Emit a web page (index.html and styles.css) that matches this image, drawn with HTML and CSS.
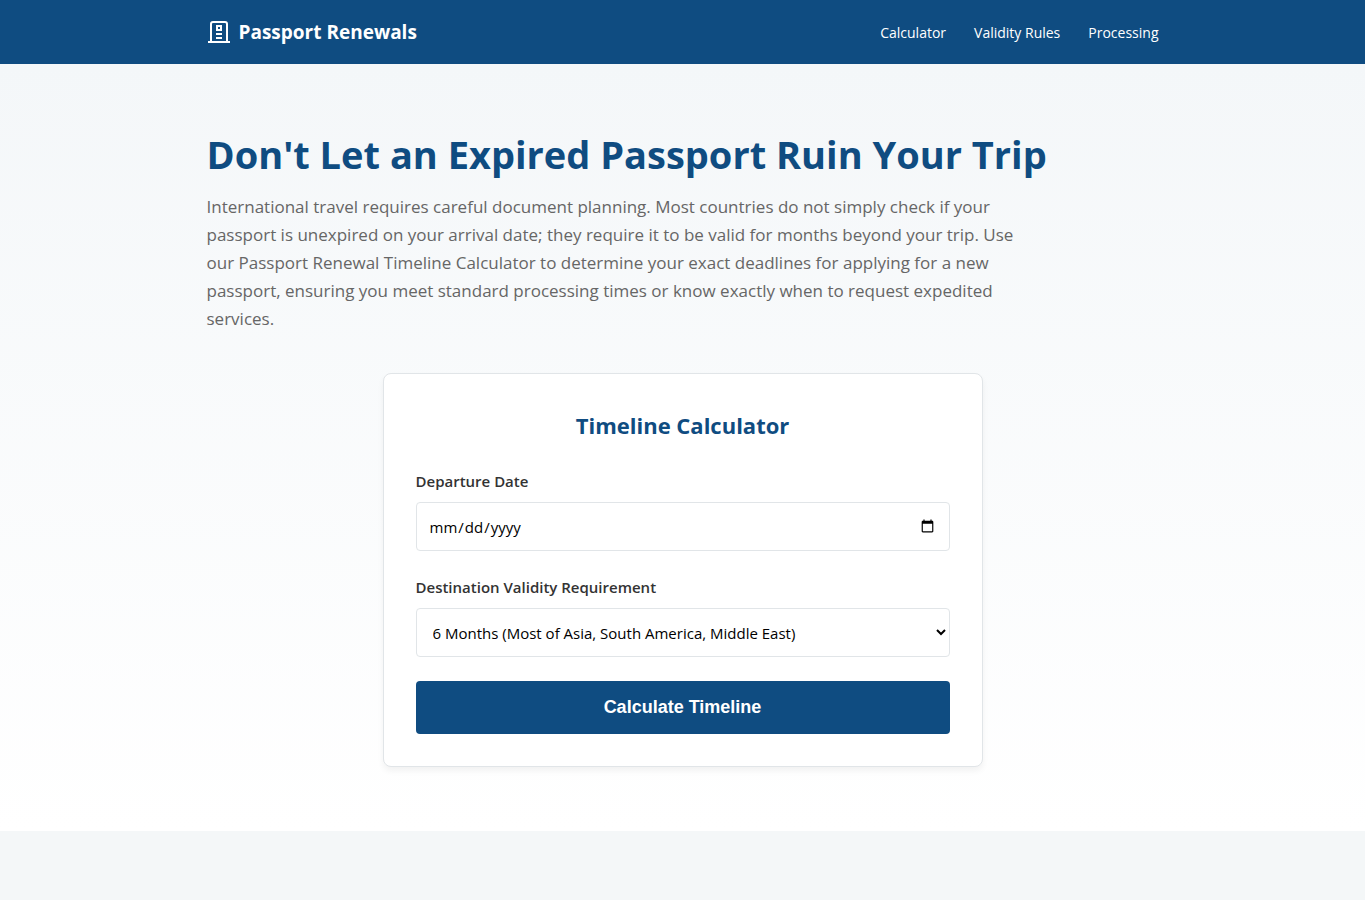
FILE: index.html
```html
<!DOCTYPE html>
<html lang="en">
<head>
    <meta charset="UTF-8">
    <meta name="viewport" content="width=device-width, initial-scale=1.0">
    <title>Passport Renewals</title>
    <link rel="stylesheet" href="styles.css">
</head>
<body>

<header class="site-header">
    <div class="container header-inner">
        <a href="#" class="logo">
            <svg class="logo-icon" viewBox="0 0 24 24" width="24" height="24" fill="none" stroke="currentColor" stroke-width="2" aria-hidden="true">
                <path d="M1 22h22M4 22V4a2 2 0 0 1 2-2h12a2 2 0 0 1 2 2v18"/>
                <path d="M10 6h4v4h-4zM9 14h6M9 18h6"/>
            </svg>
            Passport Renewals
        </a>
        <nav class="main-nav">
            <a href="#calculator">Calculator</a>
            <a href="#rules">Validity Rules</a>
            <a href="#processing">Processing</a>
        </nav>
    </div>
</header>

<main>
    <section class="hero">
        <div class="container">
            <h1>Don't Let an Expired Passport Ruin Your Trip</h1>
            <p class="intro">International travel requires careful document planning. Most countries do not simply check if your passport is unexpired on your arrival date; they require it to be valid for months beyond your trip. Use our Passport Renewal Timeline Calculator to determine your exact deadlines for applying for a new passport, ensuring you meet standard processing times or know exactly when to request expedited services.</p>

            <form class="calculator-card" id="calculator">
                <h2>Timeline Calculator</h2>
                <div class="form-group">
                    <label for="departure">Departure Date</label>
                    <input type="date" id="departure" class="form-control" required>
                </div>
                <div class="form-group">
                    <label for="validity">Destination Validity Requirement</label>
                    <select id="validity" class="form-control">
                        <option value="6">6 Months (Most of Asia, South America, Middle East)</option>
                    </select>
                </div>
                <button type="button" class="btn">Calculate Timeline</button>
            </form>
        </div>
    </section>
</main>

</body>
</html>
```
FILE: styles.css
```css
* {
    box-sizing: border-box;
    margin: 0;
    padding: 0;
}
body {
    font-family: "Segoe UI", "Open Sans", "Noto Sans", sans-serif;
    font-size: 16px;
    line-height: 25px;
    color: #333;
    background-color: #f4f7f8;
}
.container {
    max-width: 1000px;
    margin: 0 auto;
    padding: 0 24px;
}
.site-header {
    background: #0f4c81;
    color: white;
}
.header-inner {
    display: flex;
    justify-content: space-between;
    align-items: center;
    min-height: 64px;
}
.logo {
    display: flex;
    align-items: center;
    gap: 8px;
    color: white;
    font-size: 19px;
    font-weight: 700;
    text-decoration: none;
}
.main-nav {
    display: flex;
    gap: 28px;
}
.main-nav a {
    color: white;
    font-size: 14px;
    text-decoration: none;
}
.hero {
    padding: 64px 0;
    background: linear-gradient(180deg, #f4f7f9 0%, #ffffff 100%);
}
h1 {
    margin-bottom: 12px;
    font-size: 38px;
    line-height: 53px;
    color: #0f4c81;
}
.intro {
    max-width: 816px;
    margin-bottom: 40px;
    font-size: 17px;
    line-height: 28px;
    color: #666;
}
.calculator-card {
    max-width: 600px;
    margin: 0 auto;
    padding: 32px;
    background: white;
    border: 1px solid #e1e5e8;
    border-radius: 8px;
    box-shadow: 0 4px 6px rgba(0, 0, 0, 0.05);
}
h2 {
    margin-bottom: 24px;
    font-size: 22px;
    line-height: 39px;
    text-align: center;
    color: #0f4c81;
}
.form-group {
    margin-bottom: 24px;
}
label {
    display: block;
    margin-bottom: 8px;
    font-size: 15px;
    font-weight: 600;
}
.form-control {
    display: block;
    width: 100%;
    height: 49px;
    padding: 12px;
    border: 1px solid #e1e5e8;
    border-radius: 4px;
    background: white;
    color: black;
    font-family: inherit;
    font-size: 15px;
}
.btn {
    display: block;
    width: 100%;
    padding: 16px;
    border: none;
    border-radius: 4px;
    background: #0f4c81;
    color: white;
    font-family: Arial, "Liberation Sans", sans-serif;
    font-size: 18px;
    font-weight: 700;
    cursor: pointer;
}
.btn:hover {
    background: #0b3a63;
}
```
